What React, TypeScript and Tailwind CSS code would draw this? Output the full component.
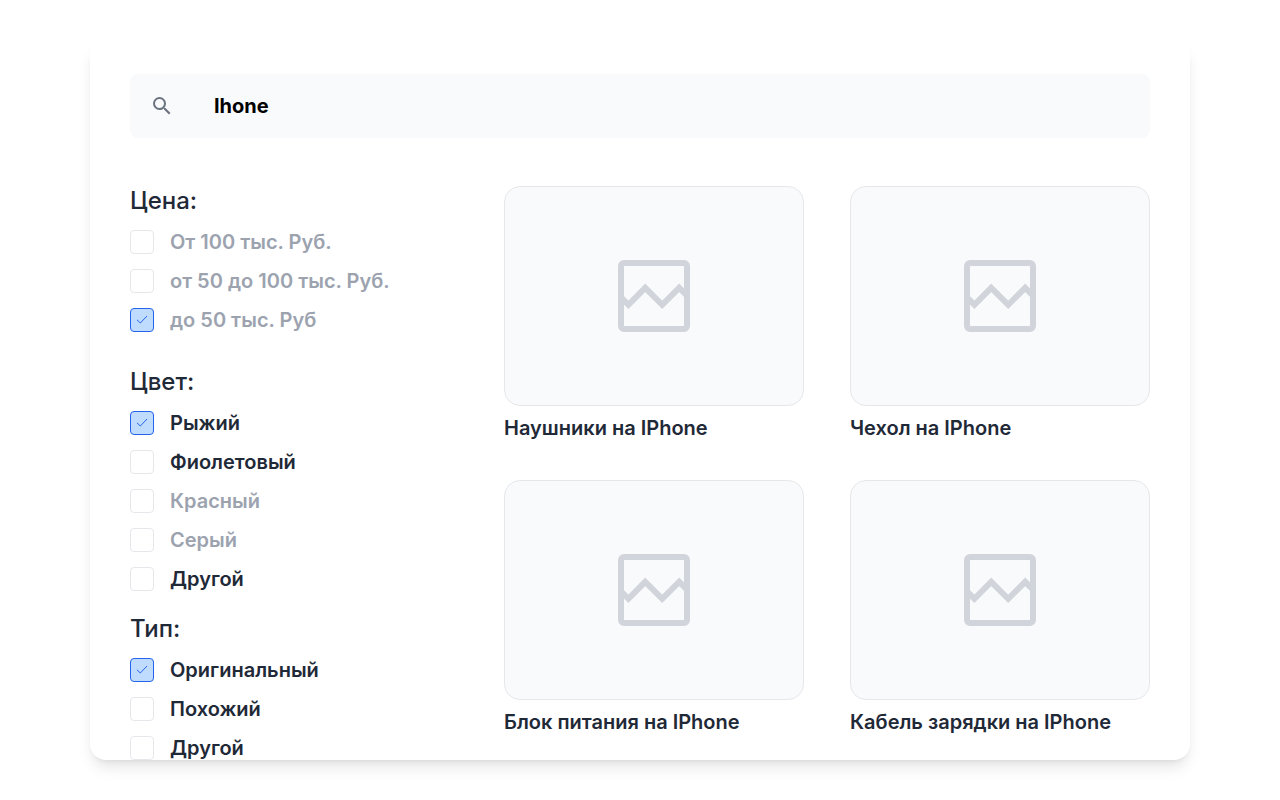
import { useState } from 'react';
import { MdSearch } from 'react-icons/md';

interface FilterOption {
  id: string;
  label: string;
  checked?: boolean;
  muted?: boolean;
}

interface FilterGroupData {
  title: string;
  options: FilterOption[];
  className?: string;
}

const filterGroups: FilterGroupData[] = [
  {
    title: 'Цена:',
    className: 'mb-[33px]',
    options: [
      { id: 'price-100', label: 'От 100 тыс. Руб.', muted: true },
      { id: 'price-50-100', label: 'от 50 до 100 тыс. Руб.', muted: true },
      { id: 'price-50', label: 'до 50 тыс. Руб', muted: true, checked: true },
    ],
  },
  {
    title: 'Цвет:',
    className: 'mb-[21px]',
    options: [
      { id: 'color-ginger', label: 'Рыжий', checked: true },
      { id: 'color-violet', label: 'Фиолетовый' },
      { id: 'color-red', label: 'Красный', muted: true },
      { id: 'color-gray', label: 'Серый', muted: true },
      { id: 'color-other', label: 'Другой' },
    ],
  },
  {
    title: 'Тип:',
    options: [
      { id: 'type-original', label: 'Оригинальный', checked: true },
      { id: 'type-similar', label: 'Похожий' },
      { id: 'type-other', label: 'Другой' },
    ],
  },
];

const products = [
  'Наушники на IPhone',
  'Чехол на IPhone',
  'Блок питания на IPhone',
  'Кабель зарядки на IPhone',
];

function ImagePlaceholder() {
  return (
    <svg viewBox="0 0 24 24" className="size-24 text-[#d1d5db]" fill="none" stroke="currentColor" strokeWidth="1.5" aria-hidden="true">
      <rect x="3.75" y="3.75" width="16.5" height="16.5" rx="0.75" />
      <path d="M3.75 12.35L5.6 14.2L9.8 9.95L14.05 14.2L18.3 9.95L20.25 11.9" />
    </svg>
  );
}

function FilterCheckbox({ option }: { option: FilterOption }) {
  const [checked, setChecked] = useState(!!option.checked);

  return (
    <label
      htmlFor={option.id}
      className={`flex items-center gap-4 text-xl font-semibold cursor-pointer ${
        option.muted ? 'text-[#9ca3af]' : 'text-[#1f2937]'
      }`}
    >
      <span className="relative size-6 shrink-0">
        <input
          id={option.id}
          type="checkbox"
          checked={checked}
          onChange={(e) => setChecked(e.target.checked)}
          className="block size-6 appearance-none rounded border border-[#e5e7eb] bg-white checked:border-[#2563eb] checked:bg-[#bfdbfe]"
        />
        {checked && (
          <svg
            viewBox="0 0 24 24"
            className="pointer-events-none absolute inset-0 size-6 text-[#2563eb]"
            fill="none"
            stroke="currentColor"
            aria-hidden="true"
          >
            <path d="M7 11.8L10.3 15L17 8" />
          </svg>
        )}
      </span>
      {option.label}
    </label>
  );
}

function FilterGroup({ title, options, className = '' }: FilterGroupData) {
  return (
    <fieldset className={className}>
      <legend className="mb-3 text-2xl font-medium leading-[30px] text-[#1f2937]">{title}</legend>
      <div className="flex flex-col gap-[11px]">
        {options.map((option) => (
          <FilterCheckbox key={option.id} option={option} />
        ))}
      </div>
    </fieldset>
  );
}

function ProductCard({ title }: { title: string }) {
  return (
    <article>
      <div className="flex h-[220px] items-center justify-center rounded-2xl border border-[#e5e7eb] bg-[#f9fafb]">
        <ImagePlaceholder />
      </div>
      <h2 className="mt-2 text-xl font-semibold text-[#1f2937]">{title}</h2>
    </article>
  );
}

export default function App() {
  const [query, setQuery] = useState('Ihone');

  return (
    <div className="h-screen bg-white p-10 font-['Inter',sans-serif] antialiased">
      <main className="mx-auto h-full max-w-[1100px] overflow-hidden rounded-2xl bg-white px-10 pt-[34px] shadow-lg">
        <div className="flex h-16 items-center gap-10 rounded-lg bg-[#f9fafb] px-5">
          <MdSearch className="size-6 shrink-0 text-[#6b7280]" />
          <input
            type="text"
            aria-label="Поиск"
            value={query}
            onChange={(e) => setQuery(e.target.value)}
            className="min-w-0 flex-1 bg-transparent text-xl font-bold text-black outline-none"
          />
        </div>
        <div className="mt-12 flex items-start justify-between gap-10">
          <aside className="shrink-0">
            {filterGroups.map((group) => (
              <FilterGroup key={group.title} {...group} />
            ))}
          </aside>
          <section className="grid max-w-[646px] flex-1 grid-cols-2 gap-x-[46px] gap-y-[38px]">
            {products.map((title) => (
              <ProductCard key={title} title={title} />
            ))}
          </section>
        </div>
      </main>
    </div>
  );
}
